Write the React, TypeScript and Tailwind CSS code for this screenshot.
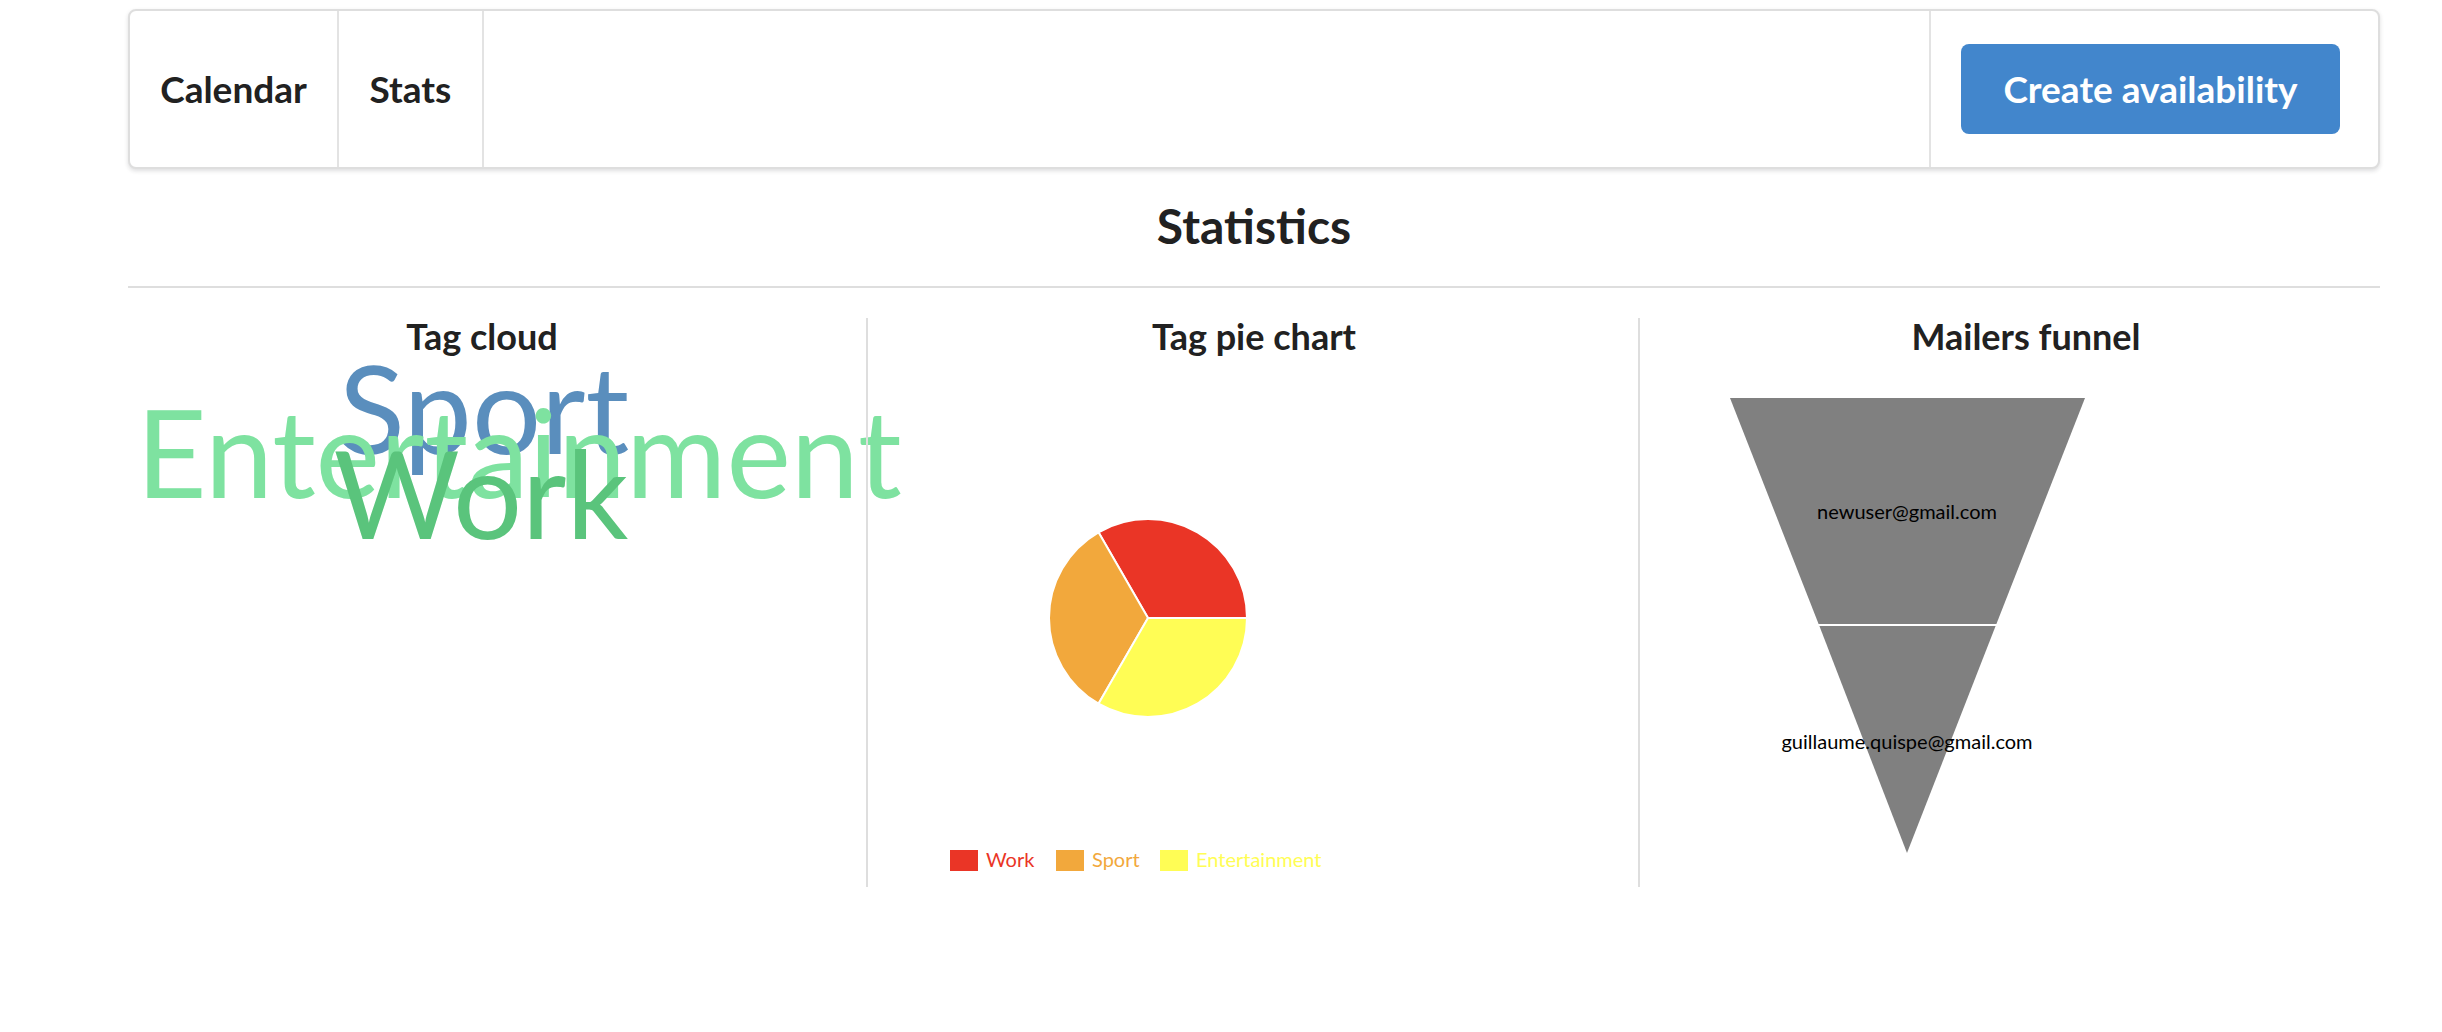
import React from "react"

const font = { fontFamily: "Lato, 'Noto Sans', sans-serif" }

function TagCloud() {
  return (
    <svg width="708" height="534" className="overflow-visible block">
      <g style={font}>
        <text x="356" y="100" textAnchor="middle" fontSize="122" fill="#5a8ebd">
          Sport
        </text>
        <text x="391" y="144" textAnchor="middle" fontSize="122" fill="#7ee2a0">
          Entertainment
        </text>
        <text x="353" y="185" textAnchor="middle" fontSize="122" fill="#5ac47c">
          Work
        </text>
      </g>
    </svg>
  )
}

function PieChart() {
  const legend = [
    { label: "Work", color: "#ea3526", x: 50 },
    { label: "Sport", color: "#f2a83c", x: 156 },
    { label: "Entertainment", color: "#fffd55", x: 260 },
  ]
  return (
    <svg width="708" height="534" className="block">
      <g stroke="#fff" strokeWidth="2" strokeLinejoin="round">
        <path d="M248 264 L347 264 A99 99 0 0 0 198.5 178.26 Z" fill="#ea3526" />
        <path d="M248 264 L198.5 178.26 A99 99 0 0 0 198.5 349.74 Z" fill="#f2a83c" />
        <path d="M248 264 L198.5 349.74 A99 99 0 0 0 347 264 Z" fill="#fffd55" />
      </g>
      <g style={font} fontSize="20">
        {legend.map((item) => (
          <g key={item.label}>
            <rect x={item.x} y="496" width="28" height="21" fill={item.color} />
            <text x={item.x + 36} y="513" fill={item.color}>
              {item.label}
            </text>
          </g>
        ))}
      </g>
    </svg>
  )
}

function Funnel() {
  return (
    <svg width="708" height="534" className="block">
      <polygon points="58,44 413,44 324.4,270 146.6,270" fill="#808080" />
      <polygon points="147.4,272 323.6,272 235,499" fill="#808080" />
      <g style={font} fontSize="20" fill="#000" textAnchor="middle">
        <text x="235" y="165">newuser@gmail.com</text>
        <text x="235" y="395">guillaume.quispe@gmail.com</text>
      </g>
    </svg>
  )
}

export default function App() {
  return (
    <div className="min-h-screen bg-white text-[#212121]" style={font}>
      <div className="ml-[128px] w-[2252px] pt-[9px]">
        {/* Top menu */}
        <nav className="flex h-[160px] rounded-[8px] border-2 border-[#dedede] bg-white shadow-[0_2px_4px_0_rgba(34,36,38,0.15)]">
          <a className="flex w-[209px] items-center justify-center border-r-2 border-[#e3e3e3] text-[37px] font-bold leading-[40px]">
            Calendar
          </a>
          <a className="flex w-[145px] items-center justify-center border-r-2 border-[#e3e3e3] text-[37px] font-bold leading-[40px]">
            Stats
          </a>
          <div className="flex-1" />
          <div className="flex items-center border-l-2 border-[#e3e3e3] pl-[30px] pr-[38px]">
            <button className="h-[90px] w-[379px] rounded-[8px] bg-[#4286cc] text-[37px] font-bold leading-[38px] text-white">
              Create availability
            </button>
          </div>
        </nav>

        <h1 className="mt-[33px] text-center text-[48px] font-bold leading-[48px]">Statistics</h1>
        <div className="mt-[36px] border-t-2 border-[#dedede]" />

        {/* Three divided columns */}
        <div className="-mx-[32px] mt-[30px] flex">
          <div className="h-[569px] w-[772px] px-[32px]">
            <h3 className="text-center text-[36px] font-bold leading-[36px]">Tag cloud</h3>
            <TagCloud />
          </div>
          <div className="h-[569px] w-[772px] px-[32px] shadow-[-2px_0_0_0_#dedede]">
            <h3 className="text-center text-[36px] font-bold leading-[36px]">Tag pie chart</h3>
            <PieChart />
          </div>
          <div className="h-[569px] w-[772px] px-[32px] shadow-[-2px_0_0_0_#dedede]">
            <h3 className="text-center text-[36px] font-bold leading-[36px]">Mailers funnel</h3>
            <Funnel />
          </div>
        </div>
      </div>
    </div>
  )
}
